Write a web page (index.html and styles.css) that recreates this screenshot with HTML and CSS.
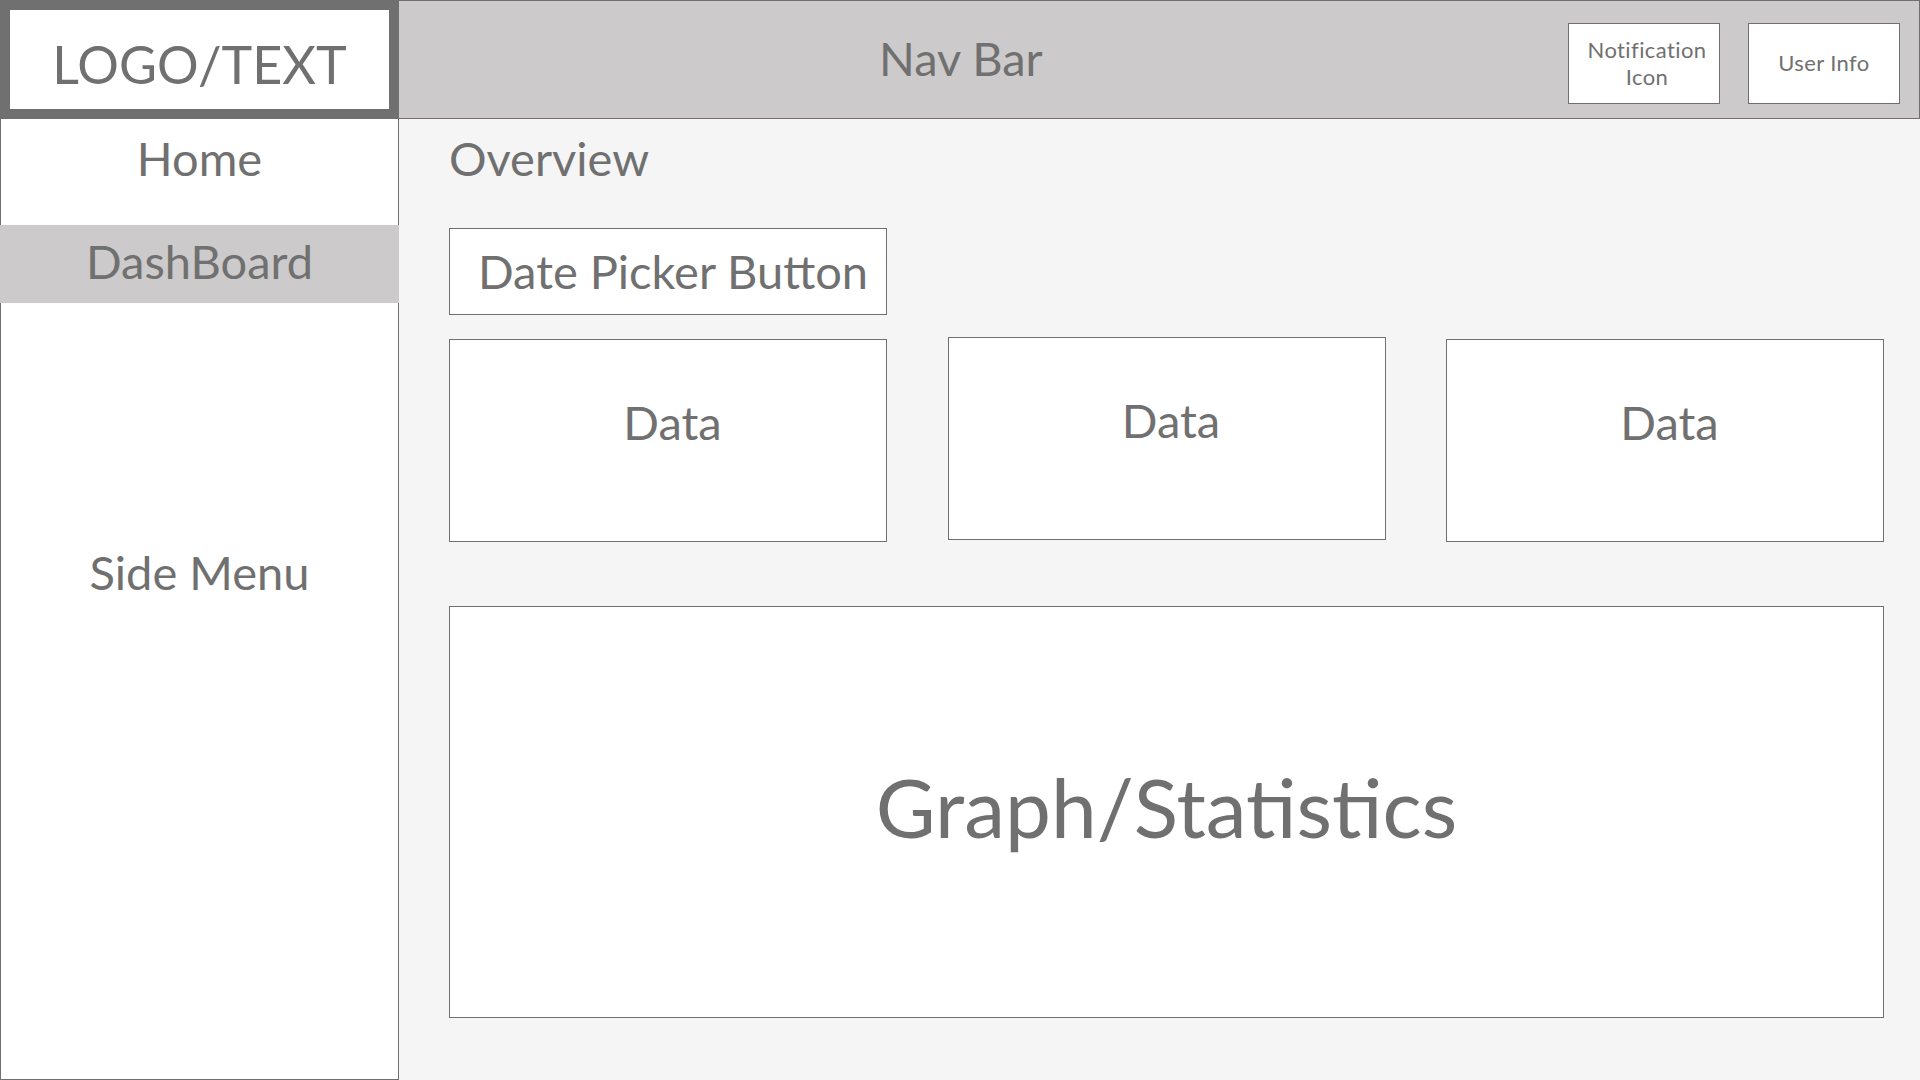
FILE: index.html
```html
<!DOCTYPE html>
<html lang="en">
<head>
<meta charset="utf-8">
<title>Dashboard Wireframe</title>
<link rel="stylesheet" href="styles.css">
</head>
<body>
<div class="app">
  <header class="topbar">
    <div class="logo">LOGO/TEXT</div>
    <nav class="navbar">
      <div class="nav-title">Nav Bar</div>
      <div class="nav-actions">
        <div class="nav-btn notif">Notification<br>Icon</div>
        <div class="nav-btn">User Info</div>
      </div>
    </nav>
  </header>
  <div class="body">
    <aside class="sidebar">
      <div class="side-item home">Home</div>
      <div class="side-item active">DashBoard</div>
      <div class="side-label">Side Menu</div>
    </aside>
    <main class="main">
      <h1 class="overview">Overview</h1>
      <div class="date-btn">Date Picker Button</div>
      <div class="cards">
        <div class="card">Data</div>
        <div class="card card-mid">Data</div>
        <div class="card">Data</div>
      </div>
      <div class="graph">Graph/Statistics</div>
    </main>
  </div>
</div>
</body>
</html>
```

FILE: styles.css
```css
* { box-sizing: border-box; }
html, body { margin: 0; padding: 0; }
body {
  width: 1920px;
  height: 1080px;
  overflow: hidden;
  font-family: "Lato", "Open Sans", sans-serif;
  color: #707070;
  background: #f5f5f5;
}
.app { display: flex; flex-direction: column; height: 1080px; }

.topbar { display: flex; height: 119px; flex: none; }
.logo {
  width: 399px;
  height: 119px;
  border: 10px solid #707070;
  background: #fff;
  display: flex;
  align-items: center;
  justify-content: center;
  font-size: 52px;
  line-height: 1;
  padding-top: 8px;
}
.navbar {
  flex: 1;
  height: 119px;
  background: #cccaca;
  border-top: 1px solid #707070;
  border-right: 1px solid #707070;
  border-bottom: 1px solid #707070;
  display: flex;
  align-items: center;
}
.nav-title {
  flex: 1;
  padding-left: 480px;
  font-size: 47px;
  line-height: 1;
  padding-bottom: 3px;
}
.nav-actions {
  align-self: flex-start;
  margin-top: 22px;
  margin-right: 19px;
  display: flex;
  gap: 28px;
}
.nav-btn {
  width: 152px;
  height: 81px;
  border: 1px solid #707070;
  background: #fff;
  display: flex;
  align-items: center;
  justify-content: center;
  text-align: center;
  font-size: 22px;
  line-height: 26.5px;
  letter-spacing: 0.4px;
}
.nav-btn.notif { padding-left: 6px; }

.body { display: flex; flex: 1; min-height: 0; }
.sidebar {
  width: 399px;
  flex: none;
  background: #fff;
  border-left: 1px solid #707070;
  border-right: 1px solid #707070;
  border-bottom: 1px solid #707070;
  display: flex;
  flex-direction: column;
}
.side-item {
  text-align: center;
  font-size: 47px;
  line-height: 1;
}
.side-item.home { height: 106px; padding-top: 16px; }
.side-item.active {
  height: 78px;
  background: #cccaca;
  display: flex;
  align-items: center;
  justify-content: center;
  margin: 0 -1px;
  padding-bottom: 5px;
}
.side-label {
  text-align: center;
  font-size: 47px;
  line-height: 1;
  margin-top: 246px;
}

.main {
  flex: 1;
  padding: 16px 35px 0 50px;
  background: #f5f5f5;
}
.overview {
  margin: 0;
  font-weight: normal;
  font-size: 47px;
  line-height: 1;
}
.date-btn {
  margin-top: 46px;
  width: 438px;
  height: 87px;
  border: 1px solid #707070;
  background: #fff;
  display: flex;
  align-items: center;
  justify-content: center;
  padding-left: 10px;
  font-size: 47px;
  line-height: 1;
}
.cards {
  margin-top: 24px;
  display: grid;
  grid-template-columns: repeat(3, 438px);
  column-gap: 60.5px;
  align-items: start;
}
.card {
  height: 203px;
  border: 1px solid #707070;
  background: #fff;
  text-align: center;
  padding-top: 59px;
  padding-left: 9px;
  font-size: 47px;
  line-height: 1;
}
.card-mid { margin-top: -2px; }
.graph {
  margin-top: 64px;
  width: 1435px;
  height: 412px;
  border: 1px solid #707070;
  background: #fff;
  display: flex;
  align-items: center;
  justify-content: center;
  font-size: 82px;
  line-height: 1;
  padding-bottom: 12px;
}
```
